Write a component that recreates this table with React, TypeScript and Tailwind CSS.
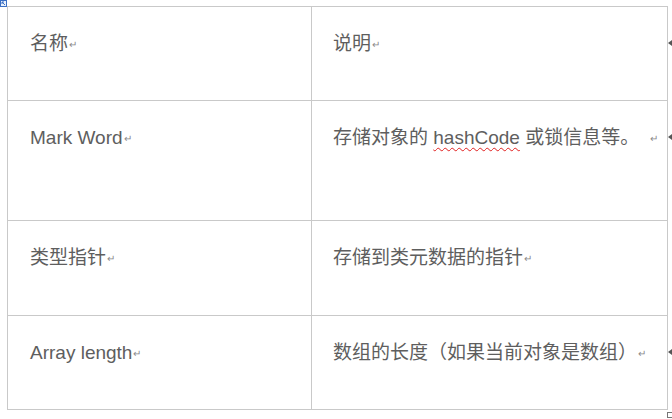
import React from "react";

const rows = [
	{ name: "名称", desc: <>说明</>, h: "h-[94px]", rowMark: true },
	{
		name: "Mark Word",
		desc: (
			<>
				存储对象的{" "}
				<span className="underline decoration-wavy decoration-[#e02020] decoration-1 underline-offset-[3px]">
					hashCode
				</span>{" "}
				或锁信息等。
			</>
		),
		h: "h-[120px]",
		rowMark: true,
	},
	{ name: "类型指针", desc: <>存储到类元数据的指针</>, h: "h-[95px]", rowMark: false },
	{
		name: "Array length",
		desc: <>数组的长度（如果当前对象是数组）</>,
		h: "h-[95px]",
		rowMark: true,
	},
];

function ParaMark() {
	return (
		<span className="ml-[1px] align-middle text-[10px] leading-none text-[#8a8a8a]">↵</span>
	);
}

export default function App() {
	return (
		<div
			className="relative h-[419px] w-[672px] overflow-hidden bg-white text-[#5e5e5e]"
			style={{ fontFamily: '"Liberation Sans", Arial, "Noto Sans CJK SC", sans-serif' }}
		>
			{/* table anchor */}
			<svg className="absolute left-0 top-0" width="7" height="7" viewBox="0 0 7 7">
				<rect x="0.5" y="0.5" width="6" height="6" fill="#e8f0fb" stroke="#3b6fc4" />
				<path d="M2 2h2M2 2v2M2 2l3 3" stroke="#3b6fc4" strokeWidth="1" />
			</svg>

			<div className="pl-[7px] pt-[6px]">
				<div className="w-[665px]">
					{rows.map((r, i) => (
						<div key={i} className={`flex ${r.h}`}>
							<div
								className={`w-[304px] border-l border-t border-[#c9c9c9] ${
									i === rows.length - 1 ? "border-b" : ""
								} pl-[22px] pt-[25px] text-[19px] leading-[24px]`}
							>
								{r.name}
								<ParaMark />
							</div>
							<div
								className={`w-[357px] border-x border-t border-[#c9c9c9] ${
									i === rows.length - 1 ? "border-b" : ""
								} pl-[21px] pt-[25px] text-[19px] leading-[24px]`}
							>
								{r.desc}
								{i === 1 && <span className="inline-block w-[10px]" />}
								<ParaMark />
							</div>
							<div className="flex w-[4px] items-start pt-[34px]">
								{r.rowMark && (
									<svg width="4" height="6" viewBox="0 0 4 6">
										<path d="M0 3L4 0V6Z" fill="#555555" />
									</svg>
								)}
							</div>
						</div>
					))}
				</div>
			</div>

			{/* resize handle */}
			<div className="absolute left-[667px] top-[412px] h-[6px] w-[6px] border border-[#777777] bg-white" />
		</div>
	);
}
